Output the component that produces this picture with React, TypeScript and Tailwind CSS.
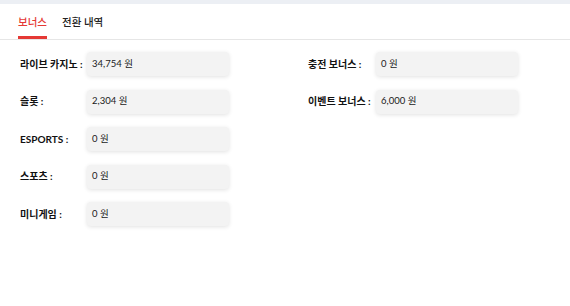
import React from "react";

const left = [
  { label: "라이브 카지노 :", value: "34,754 원" },
  { label: "슬롯 :", value: "2,304 원" },
  { label: "ESPORTS :", value: "0 원" },
  { label: "스포츠 :", value: "0 원" },
  { label: "미니게임 :", value: "0 원" },
];
const right = [
  { label: "충전 보너스 :", value: "0 원" },
  { label: "이벤트 보너스 :", value: "6,000 원" },
];

function Row({ label, value, wide }: { label: string; value: string; wide?: boolean }) {
  return (
    <div className="flex items-center h-[24px]">
      <div
        className={
          wide
            ? "w-[68px] shrink-0 text-[10px] font-bold text-[#111] whitespace-nowrap"
            : "w-[67px] shrink-0 text-[10px] font-bold text-[#111] whitespace-nowrap"
        }
      >
        {label}
      </div>
      <div className="w-[142px] h-[24px] rounded-[4px] bg-[#f3f3f3] shadow-[0_1px_4px_rgba(0,0,0,0.12)] flex items-center px-[5px] text-[9.5px] text-[#1a1a1a]">
        {value}
      </div>
    </div>
  );
}

export default function App() {
  return (
    <div
      className="w-[570px] h-[306px] bg-white"
      style={{ fontFamily: 'Lato, "Noto Sans CJK KR", sans-serif' }}
    >
      <div className="h-[4px] bg-[#eceff4]" />
      <div className="flex gap-[15px] px-[18px] border-b border-[#e6e6e6] h-[36px]">
        <div className="flex flex-col justify-end">
          <div className="text-[10.5px] text-[#e53935] font-medium leading-none pb-[9px]">보너스</div>
          <div className="h-[3px] bg-[#e53935]" />
        </div>
        <div className="flex flex-col justify-end">
          <div className="text-[10.5px] text-[#222] font-medium leading-none pb-[12px]">전환 내역</div>
        </div>
      </div>
      <div className="grid grid-cols-[288px_1fr] px-[20px] pt-[12px]">
        <div className="flex flex-col gap-[13.5px]">
          {left.map((r) => (
            <Row key={r.label} {...r} />
          ))}
        </div>
        <div className="flex flex-col gap-[13.5px]">
          {right.map((r) => (
            <Row key={r.label} {...r} wide />
          ))}
        </div>
      </div>
    </div>
  );
}
